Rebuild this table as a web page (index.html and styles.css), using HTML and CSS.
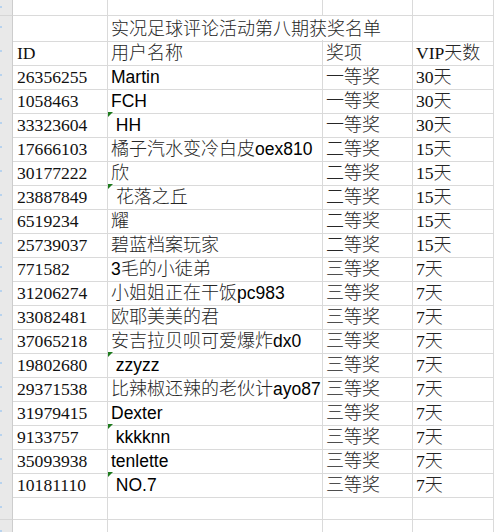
FILE: index.html
```html
<!DOCTYPE html>
<html lang="zh-CN">
<head>
<meta charset="utf-8">
<title>实况足球评论活动第八期获奖名单</title>
<link rel="stylesheet" href="styles.css">
</head>
<body>
<div class="sheet">
  <div class="row first"><div class="c rh"></div><div class="c"></div><div class="c"></div><div class="c"></div><div class="c"></div></div>
  <div class="row"><div class="c rh"></div><div class="c"></div><div class="c wide"><span class="cj">实况足球评论活动第八期获奖名单</span></div><div class="c"></div></div>
  <div class="row"><div class="c rh"></div><div class="c id">ID</div><div class="c"><span class="cj">用户名称</span></div><div class="c"><span class="cj">奖项</span></div><div class="c">VIP<span class="cj">天数</span></div></div>

  <div class="row"><div class="c rh"></div><div class="c id">26356255</div><div class="c nm">Martin</div><div class="c"><span class="cj">一等奖</span></div><div class="c">30<span class="cj">天</span></div></div>
  <div class="row"><div class="c rh"></div><div class="c id">1058463</div><div class="c nm">FCH</div><div class="c"><span class="cj">一等奖</span></div><div class="c">30<span class="cj">天</span></div></div>
  <div class="row"><div class="c rh"></div><div class="c id">33323604</div><div class="c nm flag"> HH</div><div class="c"><span class="cj">一等奖</span></div><div class="c">30<span class="cj">天</span></div></div>
  <div class="row"><div class="c rh"></div><div class="c id">17666103</div><div class="c nm"><span class="cj">橘子汽水变冷白皮</span>oex810</div><div class="c"><span class="cj">二等奖</span></div><div class="c">15<span class="cj">天</span></div></div>
  <div class="row"><div class="c rh"></div><div class="c id">30177222</div><div class="c nm"><span class="cj">欣</span></div><div class="c"><span class="cj">二等奖</span></div><div class="c">15<span class="cj">天</span></div></div>
  <div class="row"><div class="c rh"></div><div class="c id">23887849</div><div class="c nm flag"> <span class="cj">花落之丘</span></div><div class="c"><span class="cj">二等奖</span></div><div class="c">15<span class="cj">天</span></div></div>
  <div class="row"><div class="c rh"></div><div class="c id">6519234</div><div class="c nm"><span class="cj">耀</span></div><div class="c"><span class="cj">二等奖</span></div><div class="c">15<span class="cj">天</span></div></div>
  <div class="row"><div class="c rh"></div><div class="c id">25739037</div><div class="c nm"><span class="cj">碧蓝档案玩家</span></div><div class="c"><span class="cj">二等奖</span></div><div class="c">15<span class="cj">天</span></div></div>
  <div class="row"><div class="c rh"></div><div class="c id">771582</div><div class="c nm">3<span class="cj">毛的小徒弟</span></div><div class="c"><span class="cj">三等奖</span></div><div class="c">7<span class="cj">天</span></div></div>
  <div class="row"><div class="c rh"></div><div class="c id">31206274</div><div class="c nm"><span class="cj">小姐姐正在干饭</span>pc983</div><div class="c"><span class="cj">三等奖</span></div><div class="c">7<span class="cj">天</span></div></div>
  <div class="row"><div class="c rh"></div><div class="c id">33082481</div><div class="c nm"><span class="cj">欧耶美美的君</span></div><div class="c"><span class="cj">三等奖</span></div><div class="c">7<span class="cj">天</span></div></div>
  <div class="row"><div class="c rh"></div><div class="c id">37065218</div><div class="c nm"><span class="cj">安吉拉贝呗可爱爆炸</span>dx0</div><div class="c"><span class="cj">三等奖</span></div><div class="c">7<span class="cj">天</span></div></div>
  <div class="row"><div class="c rh"></div><div class="c id">19802680</div><div class="c nm flag"> zzyzz</div><div class="c"><span class="cj">三等奖</span></div><div class="c">7<span class="cj">天</span></div></div>
  <div class="row"><div class="c rh"></div><div class="c id">29371538</div><div class="c nm"><span class="cj">比辣椒还辣的老伙计</span>ayo87</div><div class="c"><span class="cj">三等奖</span></div><div class="c">7<span class="cj">天</span></div></div>
  <div class="row"><div class="c rh"></div><div class="c id">31979415</div><div class="c nm">Dexter</div><div class="c"><span class="cj">三等奖</span></div><div class="c">7<span class="cj">天</span></div></div>
  <div class="row"><div class="c rh"></div><div class="c id">9133757</div><div class="c nm flag"> kkkknn</div><div class="c"><span class="cj">三等奖</span></div><div class="c">7<span class="cj">天</span></div></div>
  <div class="row"><div class="c rh"></div><div class="c id">35093938</div><div class="c nm">tenlette</div><div class="c"><span class="cj">三等奖</span></div><div class="c">7<span class="cj">天</span></div></div>
  <div class="row"><div class="c rh"></div><div class="c id">10181110</div><div class="c nm flag"> NO.7</div><div class="c"><span class="cj">三等奖</span></div><div class="c">7<span class="cj">天</span></div></div>

  <div class="row"><div class="c rh"></div><div class="c"></div><div class="c"></div><div class="c"></div><div class="c"></div></div>
  <div class="row"><div class="c rh"></div><div class="c"></div><div class="c"></div><div class="c"></div><div class="c"></div></div>
</div>
</body>
</html>
```
FILE: styles.css
```css
html, body {
  margin: 0;
  padding: 0;
  background: #ffffff;
  overflow: hidden;
}

.sheet {
  width: 494px;
}

.row {
  display: grid;
  grid-template-columns: 13px 95px 215px 90px 81px;
  height: 24px;
}

.row.first {
  height: 16px;
}

.c {
  position: relative;
  box-sizing: border-box;
  height: 100%;
  border-right: 1px solid #dadada;
  border-bottom: 1px solid #dadada;
  padding: 1.5px 0 0 3px;
  font-family: "Liberation Serif", "Noto Sans CJK SC", serif;
  font-size: 17.6px;
  line-height: 23px;
  color: #111111;
  white-space: pre;
}

.c.wide {
  grid-column: span 2;
}

.c.id {
  padding-left: 4px;
}

.c.nm {
  font-family: "Liberation Sans", "Noto Sans CJK SC", sans-serif;
  font-size: 17.5px;
  color: #000000;
}

.cj {
  font-family: "Noto Sans CJK SC", sans-serif;
  font-size: 18px;
  font-weight: 300;
  line-height: 0;
  color: #262626;
}

.c.flag::before {
  content: "";
  position: absolute;
  left: 0;
  top: 0;
  width: 0;
  height: 0;
  border-top: 5px solid #1e7b1e;
  border-right: 5px solid transparent;
}

.c.rh {
  background: #e9e9e9;
  border-right: 1px solid #cdcdcd;
  border-bottom: 1px solid #d6d6d6;
}

.c.rh::after {
  content: "";
  position: absolute;
  left: 0;
  top: 10px;
  width: 2px;
  height: 2px;
  background: #b8d3ee;
}

.row.first .c.rh::after {
  top: 6px;
}
```
